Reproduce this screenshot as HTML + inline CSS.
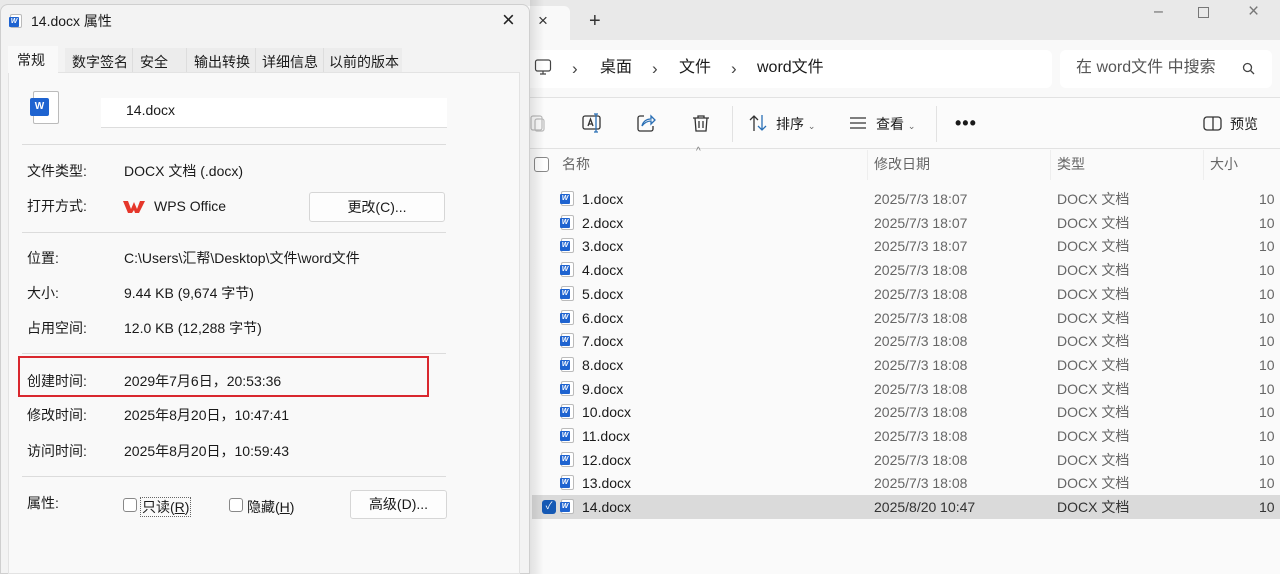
<!DOCTYPE html>
<html><head><meta charset="utf-8"><style>
*{margin:0;padding:0;box-sizing:border-box}
body{width:1280px;height:574px;overflow:hidden;position:relative;background:#fafafa;font-family:"Liberation Sans","Noto Sans CJK SC",sans-serif;font-size:14px;line-height:18px;color:#1a1a1a}
.a{position:absolute;white-space:nowrap}
.wi{position:absolute;width:13px;height:15px;background:#fff;border:1px solid #bbb;border-radius:2px}
.wi:before{content:"W";position:absolute;left:-2px;top:2px;width:10px;height:10px;background:#1e63d0;color:#fff;font-size:7px;line-height:10px;font-weight:bold;text-align:center;border-radius:1px}
.sep{position:absolute;left:22px;width:424px;height:1px;background:#dcdcdc}
.lab{position:absolute;left:27px;white-space:nowrap}
.val{position:absolute;left:124px;white-space:nowrap}
.btn{position:absolute;background:#fdfdfd;border:1px solid #d6d6d6;border-radius:3px;text-align:center}
.row{position:absolute;left:532px;width:748px;height:24px}
.row span{position:absolute;top:3px;white-space:nowrap;line-height:18px}
.g{color:#666}
.chev{position:absolute;top:60px;font-size:17px;color:#444}
</style></head><body>
<!-- explorer -->
<div class="a" style="left:0;top:0;width:1280px;height:40px;background:#e9e9e9"></div>
<div class="a" style="left:520px;top:6px;width:50px;height:36px;background:#f9f9f9;border-radius:6px 6px 0 0"></div>
<div class="a" style="left:538px;top:12px;font-size:17px;color:#333">×</div>
<div class="a" style="left:589px;top:12px;font-size:20px;color:#333">+</div>
<div class="a" style="left:1154px;top:3px;color:#666;font-size:16px">–</div>
<div class="a" style="left:1198px;top:7px;width:11px;height:11px;border:1px solid #777"></div>
<div class="a" style="left:1248px;top:3px;color:#777;font-size:19px">×</div>
<div class="a" style="left:520px;top:40px;width:760px;height:57px;background:#f9f9f9"></div>
<div class="a" style="left:520px;top:50px;width:532px;height:38px;background:#fff;border-radius:6px"></div>
<div class="a" style="left:1060px;top:50px;width:212px;height:38px;background:#fff;border-radius:6px"></div>
<svg class="a" style="left:534px;top:58px" width="18" height="18" viewBox="0 0 18 18" fill="none" stroke="#444" stroke-width="1.2"><rect x="1.5" y="2" width="15" height="11" rx="2"/><path d="M6 16h6M9 13v3"/></svg>
<div class="chev" style="left:572px">›</div>
<div class="a" style="left:600px;top:59px;font-size:16px">桌面</div>
<div class="chev" style="left:652px">›</div>
<div class="a" style="left:679px;top:59px;font-size:16px">文件</div>
<div class="chev" style="left:731px">›</div>
<div class="a" style="left:757px;top:59px;font-size:16px">word文件</div>
<div class="a" style="left:1076px;top:59px;font-size:16px;color:#555">在 word文件 中搜索</div>
<svg class="a" style="left:1242px;top:62px" width="13" height="13" viewBox="0 0 13 13" fill="none" stroke="#444" stroke-width="1.3"><circle cx="5.5" cy="5.5" r="4"/><path d="M8.5 8.5l3.5 3.5"/></svg>
<div class="a" style="left:520px;top:97px;width:760px;height:1px;background:#e2e2e2"></div>
<div class="a" style="left:520px;top:98px;width:760px;height:50px;background:#fbfbfb"></div>
<svg class="a" style="left:529px;top:113px" width="18" height="20" viewBox="0 0 18 20" fill="none" stroke="#bbb" stroke-width="1.2"><rect x="2" y="3" width="11" height="14" rx="2"/><rect x="6" y="6" width="9" height="12" rx="2"/></svg>
<svg class="a" style="left:581px;top:112px" width="22" height="22" viewBox="0 0 22 22" fill="none" stroke="#2a6fb5" stroke-width="1.3"><rect x="2" y="4" width="17" height="13" rx="2" stroke="#333"/><path d="M7 14l2.5-7 2.5 7M8 12h3" stroke="#333"/><path d="M15 2v18M13 2h4M13 20h4"/></svg>
<svg class="a" style="left:636px;top:113px" width="20" height="20" viewBox="0 0 20 20" fill="none" stroke="#333" stroke-width="1.3"><path d="M8 3H4a2 2 0 0 0-2 2v11a2 2 0 0 0 2 2h11a2 2 0 0 0 2-2v-3"/><path d="M6 13c1-5 5-7 9-7V3l4 4-4 4V8c-3 0-6 1-9 5z" stroke="#2a6fb5"/></svg>
<svg class="a" style="left:691px;top:113px" width="20" height="20" viewBox="0 0 20 20" fill="none" stroke="#333" stroke-width="1.3"><path d="M2 5h16M7 5V3h6v2M4 5l1 13h10l1-13M8 8v7M12 8v7"/></svg>
<div class="a" style="left:732px;top:106px;width:1px;height:36px;background:#e2e2e2"></div>
<svg class="a" style="left:748px;top:114px" width="20" height="18" viewBox="0 0 20 18" fill="none" stroke="#333" stroke-width="1.3"><path d="M6 17V2M2 6l4-4 4 4"/><path d="M14 1v15M10 12l4 4 4-4" stroke="#2a6fb5"/></svg>
<div class="a" style="left:776px;top:115px">排序 <span style="font-size:9px;color:#666">⌄</span></div>
<svg class="a" style="left:849px;top:116px" width="18" height="14" viewBox="0 0 18 14" stroke="#333" stroke-width="1.3"><path d="M1 2h16M1 7h16M1 12h16"/></svg>
<div class="a" style="left:876px;top:115px">查看 <span style="font-size:9px;color:#666">⌄</span></div>
<div class="a" style="left:936px;top:106px;width:1px;height:36px;background:#e2e2e2"></div>
<div class="a" style="left:955px;top:114px;font-size:18px;font-weight:bold;letter-spacing:1px">•••</div>
<svg class="a" style="left:1203px;top:116px" width="19" height="15" viewBox="0 0 19 15" fill="none" stroke="#333" stroke-width="1.3"><rect x="1" y="1" width="17" height="13" rx="3"/><path d="M10 1v13"/></svg>
<div class="a" style="left:1230px;top:115px">预览</div>
<div class="a" style="left:520px;top:148px;width:760px;height:1px;background:#e2e2e2"></div>
<div class="a" style="left:696px;top:143px;font-size:10px;color:#777">^</div>
<div class="a" style="left:534px;top:157px;width:15px;height:15px;border:1px solid #888;border-radius:3px;background:#fff"></div>
<div class="a g" style="left:562px;top:155px">名称</div>
<div class="a" style="left:867px;top:150px;width:1px;height:30px;background:#eee"></div>
<div class="a g" style="left:874px;top:155px">修改日期</div>
<div class="a" style="left:1050px;top:150px;width:1px;height:30px;background:#eee"></div>
<div class="a g" style="left:1057px;top:155px">类型</div>
<div class="a" style="left:1203px;top:150px;width:1px;height:30px;background:#eee"></div>
<div class="a g" style="left:1210px;top:155px">大小</div>

<div class="row" style="top:187px"><i class="wi" style="left:29px;top:4px"></i><span style="left:50px">1.docx</span><span class="g" style="left:342px">2025/7/3 18:07</span><span class="g" style="left:525px">DOCX 文档</span><span class="g" style="left:727px">10</span></div>
<div class="row" style="top:211px"><i class="wi" style="left:29px;top:4px"></i><span style="left:50px">2.docx</span><span class="g" style="left:342px">2025/7/3 18:07</span><span class="g" style="left:525px">DOCX 文档</span><span class="g" style="left:727px">10</span></div>
<div class="row" style="top:234px"><i class="wi" style="left:29px;top:4px"></i><span style="left:50px">3.docx</span><span class="g" style="left:342px">2025/7/3 18:07</span><span class="g" style="left:525px">DOCX 文档</span><span class="g" style="left:727px">10</span></div>
<div class="row" style="top:258px"><i class="wi" style="left:29px;top:4px"></i><span style="left:50px">4.docx</span><span class="g" style="left:342px">2025/7/3 18:08</span><span class="g" style="left:525px">DOCX 文档</span><span class="g" style="left:727px">10</span></div>
<div class="row" style="top:282px"><i class="wi" style="left:29px;top:4px"></i><span style="left:50px">5.docx</span><span class="g" style="left:342px">2025/7/3 18:08</span><span class="g" style="left:525px">DOCX 文档</span><span class="g" style="left:727px">10</span></div>
<div class="row" style="top:306px"><i class="wi" style="left:29px;top:4px"></i><span style="left:50px">6.docx</span><span class="g" style="left:342px">2025/7/3 18:08</span><span class="g" style="left:525px">DOCX 文档</span><span class="g" style="left:727px">10</span></div>
<div class="row" style="top:329px"><i class="wi" style="left:29px;top:4px"></i><span style="left:50px">7.docx</span><span class="g" style="left:342px">2025/7/3 18:08</span><span class="g" style="left:525px">DOCX 文档</span><span class="g" style="left:727px">10</span></div>
<div class="row" style="top:353px"><i class="wi" style="left:29px;top:4px"></i><span style="left:50px">8.docx</span><span class="g" style="left:342px">2025/7/3 18:08</span><span class="g" style="left:525px">DOCX 文档</span><span class="g" style="left:727px">10</span></div>
<div class="row" style="top:377px"><i class="wi" style="left:29px;top:4px"></i><span style="left:50px">9.docx</span><span class="g" style="left:342px">2025/7/3 18:08</span><span class="g" style="left:525px">DOCX 文档</span><span class="g" style="left:727px">10</span></div>
<div class="row" style="top:400px"><i class="wi" style="left:29px;top:4px"></i><span style="left:50px">10.docx</span><span class="g" style="left:342px">2025/7/3 18:08</span><span class="g" style="left:525px">DOCX 文档</span><span class="g" style="left:727px">10</span></div>
<div class="row" style="top:424px"><i class="wi" style="left:29px;top:4px"></i><span style="left:50px">11.docx</span><span class="g" style="left:342px">2025/7/3 18:08</span><span class="g" style="left:525px">DOCX 文档</span><span class="g" style="left:727px">10</span></div>
<div class="row" style="top:448px"><i class="wi" style="left:29px;top:4px"></i><span style="left:50px">12.docx</span><span class="g" style="left:342px">2025/7/3 18:08</span><span class="g" style="left:525px">DOCX 文档</span><span class="g" style="left:727px">10</span></div>
<div class="row" style="top:471px"><i class="wi" style="left:29px;top:4px"></i><span style="left:50px">13.docx</span><span class="g" style="left:342px">2025/7/3 18:08</span><span class="g" style="left:525px">DOCX 文档</span><span class="g" style="left:727px">10</span></div>
<div class="row" style="top:495px;background:#dadada"><div class="a" style="left:10px;top:5px;width:14px;height:14px;background:#1559b4;border-radius:3px;color:#fff;font-size:10px;text-align:center;line-height:14px">✓</div><i class="wi" style="left:29px;top:4px"></i><span style="left:50px">14.docx</span><span style="left:342px;color:#333">2025/8/20 10:47</span><span style="left:525px;color:#333">DOCX 文档</span><span style="left:727px;color:#333">10</span></div>

<!-- dialog -->
<div class="a" style="left:530px;top:0;width:14px;height:574px;background:linear-gradient(90deg,rgba(0,0,0,.1),rgba(0,0,0,0))"></div>
<div class="a" style="left:0;top:4px;width:530px;height:570px;background:#f3f3f3;border:1px solid #cfcfcf;border-radius:8px 8px 0 0"></div>
<i class="wi" style="left:10px;top:14px;width:12px;height:14px"></i>
<div class="a" style="left:31px;top:12px">14.docx 属性</div>
<div class="a" style="left:502px;top:8px;font-size:22px;line-height:24px;color:#222">×</div>
<div class="a" style="left:8px;top:72px;width:512px;height:502px;background:#f9f9f9;border:1px solid #e3e3e3"></div>
<div class="a" style="left:65px;top:48px;width:337px;height:24px;background:#ececec"></div>
<div class="a" style="left:8px;top:46px;width:50px;height:27px;background:#f9f9f9"></div>
<div class="a" style="left:17px;top:51px">常规</div>
<div class="a" style="left:72px;top:53px">数字签名</div>
<div class="a" style="left:132px;top:48px;width:1px;height:24px;background:#ddd"></div>
<div class="a" style="left:140px;top:53px">安全</div>
<div class="a" style="left:186px;top:48px;width:1px;height:24px;background:#ddd"></div>
<div class="a" style="left:194px;top:53px">输出转换</div>
<div class="a" style="left:255px;top:48px;width:1px;height:24px;background:#ddd"></div>
<div class="a" style="left:262px;top:53px">详细信息</div>
<div class="a" style="left:323px;top:48px;width:1px;height:24px;background:#ddd"></div>
<div class="a" style="left:329px;top:53px">以前的版本</div>
<!-- big icon -->
<div class="a" style="left:33px;top:91px;width:26px;height:33px;background:#fff;border:1px solid #bbb;border-radius:2px"></div>
<div class="a" style="left:30px;top:98px;width:19px;height:18px;background:#1e63d0;color:#fff;font-size:10px;font-weight:bold;text-align:center;line-height:18px;border-radius:2px">W</div>
<div class="a" style="left:101px;top:98px;width:346px;height:30px;background:#fff;border-bottom:1px solid #ddd"></div>
<div class="a" style="left:126px;top:101px">14.docx</div>
<div class="sep" style="top:144px"></div>
<div class="lab" style="top:162px">文件类型:</div><div class="val" style="top:162px">DOCX 文档 (.docx)</div>
<div class="lab" style="top:197px">打开方式:</div>
<svg class="a" style="left:123px;top:200px" width="22" height="14" viewBox="0 0 22 14"><path d="M0 1h5l3 8 3-7 3 7 3-8h5l-6 12h-4l-1-3-2 3h-4z" fill="#e5372b"/></svg>
<div class="a" style="left:154px;top:197px">WPS Office</div>
<div class="btn" style="left:309px;top:192px;width:136px;height:30px;line-height:28px">更改(C)...</div>
<div class="sep" style="top:232px"></div>
<div class="lab" style="top:249px">位置:</div><div class="val" style="top:249px">C:\Users\汇帮\Desktop\文件\word文件</div>
<div class="lab" style="top:284px">大小:</div><div class="val" style="top:284px">9.44 KB (9,674 字节)</div>
<div class="lab" style="top:319px">占用空间:</div><div class="val" style="top:319px">12.0 KB (12,288 字节)</div>
<div class="sep" style="top:353px"></div>
<div class="lab" style="top:372px">创建时间:</div><div class="val" style="top:372px">2029年7月6日，20:53:36</div>
<div class="a" style="left:18px;top:356px;width:411px;height:41px;border:2px solid #d9272e"></div>
<div class="lab" style="top:406px">修改时间:</div><div class="val" style="top:406px">2025年8月20日，10:47:41</div>
<div class="lab" style="top:442px">访问时间:</div><div class="val" style="top:442px">2025年8月20日，10:59:43</div>
<div class="sep" style="top:476px"></div>
<div class="lab" style="top:494px">属性:</div>
<div class="a" style="left:123px;top:498px;width:14px;height:14px;border:1px solid #888;border-radius:3px;background:#fff"></div>
<div class="a" style="left:140px;top:497px;border:1px dotted #666;padding:0 1px;line-height:18px">只读(<u>R</u>)</div>
<div class="a" style="left:229px;top:498px;width:14px;height:14px;border:1px solid #888;border-radius:3px;background:#fff"></div>
<div class="a" style="left:247px;top:498px">隐藏(<u>H</u>)</div>
<div class="btn" style="left:350px;top:490px;width:97px;height:29px;line-height:27px">高级(D)...</div>
</body></html>
